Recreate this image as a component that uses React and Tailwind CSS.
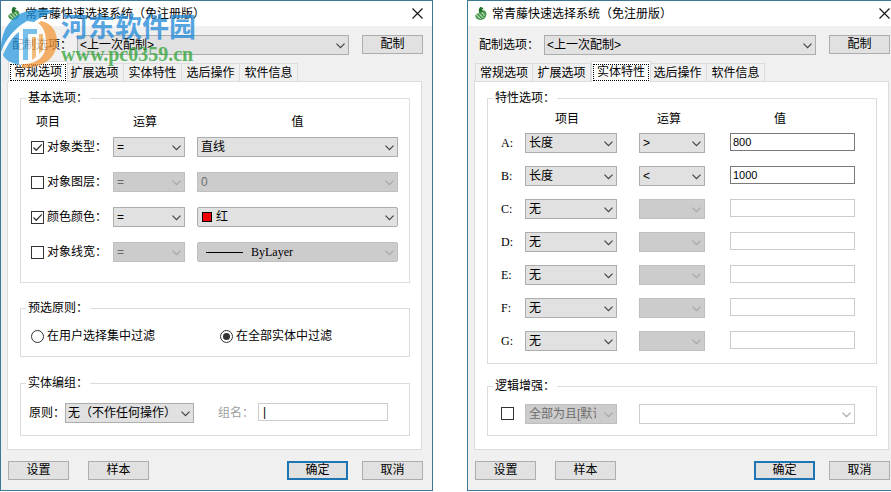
import React, { useState } from 'react';
import clsx from 'clsx';

const TABS = ['常规选项', '扩展选项', '实体特性', '选后操作', '软件信息'];

const FILTERS = [
  { name: '对象类型：', checked: true, value: '直线' },
  { name: '对象图层：', checked: false, value: '0' },
  { name: '颜色颜色：', checked: true, value: '红', swatch: true },
  { name: '对象线宽：', checked: false, value: 'ByLayer', line: true },
];

const CONDITIONS = [
  { name: 'A:', prop: '长度', op: '>', value: '800' },
  { name: 'B:', prop: '长度', op: '<', value: '1000' },
  { name: 'C:', prop: '无' },
  { name: 'D:', prop: '无' },
  { name: 'E:', prop: '无' },
  { name: 'F:', prop: '无' },
  { name: 'G:', prop: '无' },
];

function Select({ value, label, disabled, className, selectClass = 'pl-[3px]', blank, ownColor, children }) {
  return (
    <div className={clsx('relative h-5', className)}>
      <select
        aria-label={label}
        disabled={disabled}
        defaultValue={value}
        className={clsx(
          'block h-5 w-full appearance-none overflow-hidden border pr-5 leading-[18px] opacity-100 outline-none',
          selectClass,
          blank && 'border-[#cccccc] bg-white',
          !blank && disabled && 'border-[#bfbfbf] bg-[#cccccc]',
          !blank && !disabled && 'border-[#adadad] bg-[#e1e1e1]',
          disabled && !ownColor && 'text-[#6d6d6d]'
        )}
      >
        <option value={value}>{value}</option>
      </select>
      {children}
      <svg
        viewBox="0 0 9 6"
        className={clsx(
          'pointer-events-none absolute top-2 right-1 h-[6px] w-[9px]',
          disabled ? 'text-[#a6a6a6]' : 'text-[#444444]'
        )}
        fill="none"
        stroke="currentColor"
        strokeWidth="1.2"
      >
        <path d="M0.5 0.7 4.5 4.7 8.5 0.7" />
      </svg>
    </div>
  );
}

function Checkbox({ checked, label }) {
  return (
    <label className="flex items-center gap-[3px] whitespace-nowrap">
      <span className="relative size-[13px] shrink-0">
        <input
          type="checkbox"
          aria-label={label ? undefined : '逻辑增强'}
          defaultChecked={checked}
          className="peer block size-[13px] appearance-none border border-[#333333] bg-white"
        />
        <svg
          viewBox="0 0 13 13"
          className="pointer-events-none absolute inset-0 hidden size-[13px] peer-checked:block"
          fill="none"
          stroke="#333333"
          strokeWidth="1.3"
        >
          <path d="M2.5 6.5 5.2 9.2 10.8 3.4" />
        </svg>
      </span>
      {label}
    </label>
  );
}

function Radio({ name, checked, label }) {
  return (
    <label className="flex items-center gap-[3px] whitespace-nowrap">
      <input
        type="radio"
        name={name}
        defaultChecked={checked}
        className="grid size-[13px] shrink-0 appearance-none place-items-center rounded-full border border-[#333333] bg-white before:size-[7px] before:rounded-full checked:before:bg-[#333333]"
      />
      {label}
    </label>
  );
}

function Button({ primary, children }) {
  return (
    <button
      className={clsx(
        'h-[19px] w-[61px] shrink-0 bg-[#e1e1e1]',
        primary ? 'border-2 border-[#1f74b4] leading-[15px]' : 'border border-[#adadad] leading-[17px]'
      )}
    >
      {children}
    </button>
  );
}

function Group({ title, className, children }) {
  return (
    <fieldset className={clsx('min-w-0 border border-[#dcdcdc]', className)}>
      <legend className="ml-[5px] px-[2px] leading-4">{title}</legend>
      {children}
    </fieldset>
  );
}

function AppIcon() {
  return (
    <svg viewBox="0 0 14 15" className="h-[15px] w-[14px] shrink-0">
      <path d="M7.500 5C9 3.800 11 4.200 12 6c1.200 2.400 0 6-2.600 7.300C6.600 14.600 2.600 13.800 1.400 11 .8 9.400 2 7.600 4.200 7.200Z" fill="#4c9a50" />
      <path d="M5.400 7C4.200 4.600 4.600 2 6.600.8L9.600 2.200 8 4 9.200 5.200Z" fill="#25722f" />
      <path d="M2.200 8.600 6.600 12.600M5 7.600 9.200 11.800M8 6.200 10.400 9.600" stroke="#e4f4e4" strokeWidth="1" fill="none" />
    </svg>
  );
}

function Dialog({ initialTab, children }) {
  const [tab, setTab] = useState(initialTab);

  return (
    <section className="min-w-0 flex-1 border border-[#3f7896] bg-[#f0f0f0]">
      <header className="flex h-[25px] items-center justify-between bg-white pr-[9px] pl-[6px]">
        <div className="flex items-center gap-1">
          <AppIcon />
          <h1 className="whitespace-nowrap">常青藤快速选择系统（免注册版）</h1>
        </div>
        <button aria-label="关闭" className="flex">
          <svg viewBox="0 0 11 11" className="size-[11px]" stroke="#111111" strokeWidth="1.1">
            <path d="M.5.5 10.500 10.500M10.500.5.5 10.500" />
          </svg>
        </button>
      </header>

      <div className="pt-[9px] pr-[9px] pb-[10px] pl-[7px]">
        <div className="flex items-start">
          <span className="w-[69px] shrink-0 pl-1 leading-5 whitespace-nowrap">配制选项：</span>
          <Select value="<上一次配制>" label="配制选项" className="mr-[13px] flex-1" selectClass="pl-[2px]" />
          <Button>配制</Button>
        </div>

        <div role="tablist" className="mt-[6px] flex h-5 items-end">
          {TABS.map((name, i) => (
            <button
              key={name}
              role="tab"
              aria-selected={tab === i}
              onClick={() => setTab(i)}
              className={clsx(
                'shrink-0 border-t border-[#dcdcdc] whitespace-nowrap',
                tab === i
                  ? 'relative -mr-[2px] -mb-px h-[21px] w-[60px] border-x bg-white p-px'
                  : 'h-[18px] w-[58px] border-r leading-[18px]',
                i === 0 && tab !== 0 && 'border-l'
              )}
            >
              {tab === i ? (
                <span className="block h-[17px] border border-dotted border-black leading-[15px]">{name}</span>
              ) : (
                name
              )}
            </button>
          ))}
        </div>

        <div className="-ml-px mr-[1px] border border-[#dcdcdc] bg-white pt-2 pr-[11px] pb-[13px] pl-3">
          {children}
        </div>

        <footer className="mt-[11px] flex">
          <Button>设置</Button>
          <div className="ml-[19px] flex-1">
            <Button>样本</Button>
          </div>
          <div className="flex gap-[14px]">
            <Button primary>确定</Button>
            <Button>取消</Button>
          </div>
        </footer>
      </div>
    </section>
  );
}

function GeneralOptions() {
  return (
    <>
      <Group title="基本选项：">
        <div className="grid grid-cols-[70px_72px_1fr] gap-x-3 pt-2 pr-[11px] pb-5 pl-[10px]">
          <span className="mb-[7px] pl-[5px] leading-4">项目</span>
          <span className="mb-[7px] pl-5 leading-4">运算</span>
          <span className="mb-[7px] text-center leading-4">值</span>
          <div className="col-span-3 grid grid-cols-subgrid gap-y-[15px]">
            {FILTERS.map((f) => (
              <React.Fragment key={f.name}>
                <Checkbox checked={f.checked} label={f.name} />
                <Select value="=" label={f.name + '运算'} disabled={!f.checked} />
                <Select
                  value={f.value}
                  label={f.name + '值'}
                  disabled={!f.checked}
                  ownColor={f.line}
                  selectClass={clsx(
                    f.swatch && 'rounded-xs pl-[18px]',
                    f.line && 'rounded-xs pl-[53px] font-["Liberation_Serif",serif] text-black',
                    !f.swatch && !f.line && 'pl-[3px]'
                  )}
                >
                  {f.swatch && (
                    <span className="pointer-events-none absolute top-[5px] left-[5px] size-[10px] border border-black bg-[#f00000]" />
                  )}
                  {f.line && (
                    <span className="pointer-events-none absolute top-[10px] left-[9px] h-px w-[37px] bg-black" />
                  )}
                </Select>
              </React.Fragment>
            ))}
          </div>
        </div>
      </Group>

      <Group title="预选原则：" className="mt-[17px]">
        <div className="grid grid-cols-2 py-3 pl-[10px] leading-4">
          <Radio name="scope" label="在用户选择集中过滤" />
          <Radio name="scope" label="在全部实体中过滤" checked />
        </div>
      </Group>

      <Group title="实体编组：" className="mt-[18px]">
        <div className="flex py-3 pr-[21px] pl-2 leading-5 whitespace-nowrap">
          <span className="w-9 shrink-0">原则：</span>
          <Select value="无（不作任何操作）" label="原则" className="w-[129px]" selectClass="pl-[2px]" />
          <label htmlFor="group-name" className="mr-1 ml-6 text-[#a0a0a0]">
            组名：
          </label>
          <input
            id="group-name"
            defaultValue="|"
            className="h-[18px] min-w-0 flex-1 border border-[#cccccc] bg-white px-1 leading-4 outline-none"
          />
        </div>
      </Group>
    </>
  );
}

function EntityOptions() {
  return (
    <>
      <Group title="特性选项：">
        <div className="pt-[5px] pr-[21px] pb-3 pl-[13px]">
          <div className="mb-[6px] flex pl-6 leading-4">
            <span className="w-[92px] pl-[30px]">项目</span>
            <span className="ml-[22px] w-[66px] pl-[18px]">运算</span>
            <span className="ml-[25px] flex-1 pl-11">值</span>
          </div>
          <div className="flex flex-col gap-[13px]">
            {CONDITIONS.map((c) => (
              <div key={c.name} className="flex">
                <span className="w-6 shrink-0 font-['Liberation_Serif',serif] leading-5">{c.name}</span>
                <Select value={c.prop} label={c.name + '项目'} className="w-[92px] shrink-0" />
                <Select
                  value={c.op || ''}
                  label={c.name + '运算'}
                  disabled={!c.op}
                  className="ml-[22px] w-[66px] shrink-0"
                />
                <input
                  aria-label={c.name + '值'}
                  defaultValue={c.value}
                  disabled={!c.op}
                  className="ml-[25px] h-[18px] min-w-0 flex-1 border border-[#7a7a7a] bg-white px-[2px] text-[11px] leading-4 outline-none disabled:border-[#cccccc]"
                />
              </div>
            ))}
          </div>
        </div>
      </Group>

      <Group title="逻辑增强：" className="mt-[14px]">
        <div className="flex pt-[10px] pr-[21px] pb-[11px] pl-[13px]">
          <span className="flex w-6 shrink-0 pb-[2px]">
            <Checkbox />
          </span>
          <Select value="全部为且[默认]" label="逻辑" disabled className="w-[92px] shrink-0" />
          <Select value="" label="表达式" disabled blank className="ml-[22px] flex-1" />
        </div>
      </Group>
    </>
  );
}

function Watermark() {
  return (
    <div className="pointer-events-none absolute top-[8px] left-0 flex">
      <svg viewBox="0 0 60 62" className="h-[62px] w-[60px] opacity-75">
        <circle cx="29" cy="33" r="26" fill="#ffffff" />
        <path d="M1 44C0 22 12 5 32 2 42 0 51 2 56 3 48 6 40 9 34 14L27 13C15 20 6 30 1 44Z" fill="#1f93dc" />
        <path d="M3 47C7 37 12 29 19 24V57C11 55 5 52 3 47Z" fill="#2f9de2" />
        <path d="M23 21H37V26H28V52H23Z" fill="#4fb0ea" />
        <path d="M41 13C51 15 57 23 57 33 57 49 45 60 22 60V56C38 56 46 48 46 35 46 26 44 19 38 15Z" fill="#f3983a" />
        <path d="M32 29H36V49L32 52ZM39 26H43V42L39 46Z" fill="#f6ab55" />
      </svg>
      <div className="ml-[1px] whitespace-nowrap opacity-75">
        <div className="mt-1 text-[27px] leading-8 font-bold text-[#1e88d8]">河东软件园</div>
        <div className='font-["Liberation_Serif",serif] text-[20px] leading-5 font-bold text-[#2fa336]'>
          www.pc0359.cn
        </div>
      </div>
    </div>
  );
}

export default function App() {
  return (
    <main
      lang="zh-CN"
      className='relative overflow-hidden bg-white pb-px font-["Liberation_Sans","Noto_Sans_CJK_SC",sans-serif] text-[12px] text-black'
    >
      <div className="-mr-[9px] flex items-start gap-[34px]">
        <Dialog initialTab={0}>
          <GeneralOptions />
        </Dialog>
        <Dialog initialTab={2}>
          <EntityOptions />
        </Dialog>
      </div>
      <Watermark />
    </main>
  );
}
